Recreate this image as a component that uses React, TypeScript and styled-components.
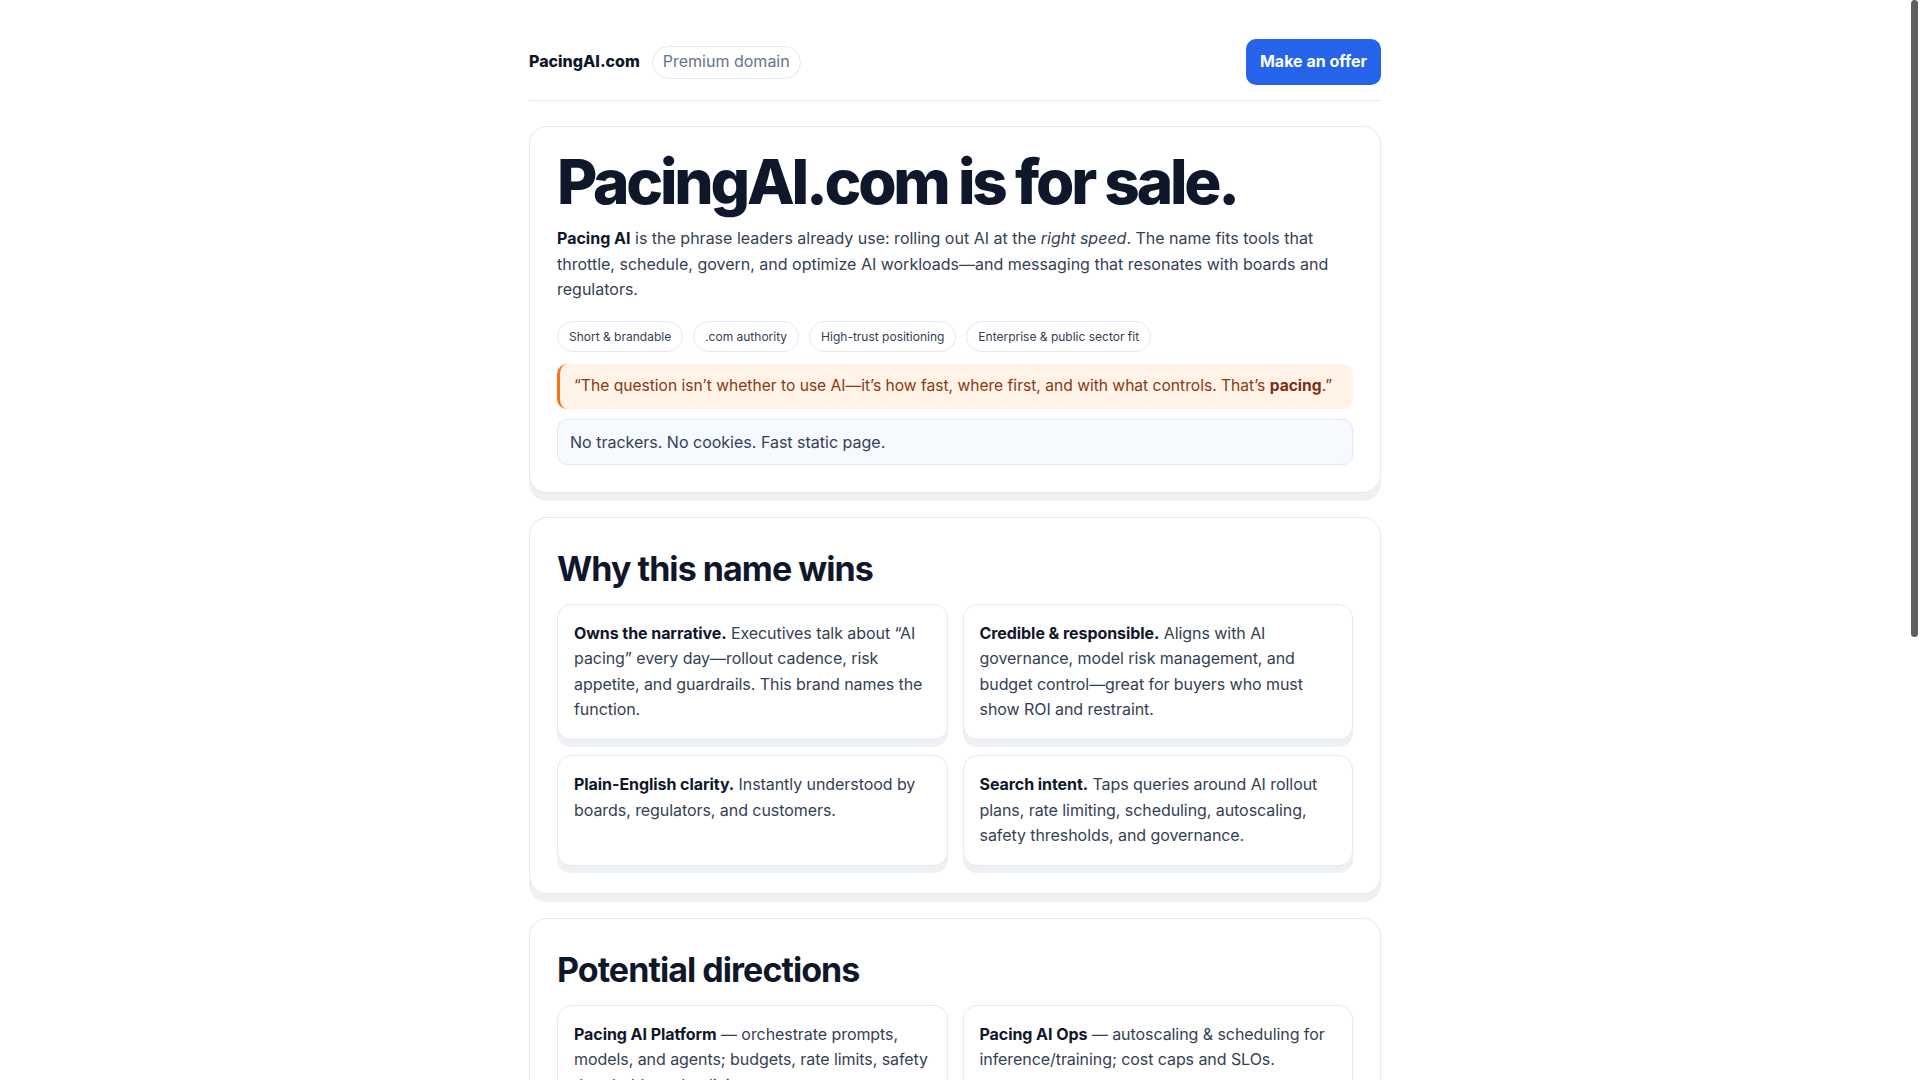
import React from "react";
import styled, { createGlobalStyle } from "styled-components";

const GlobalStyle = createGlobalStyle`
  * {
    box-sizing: border-box;
  }
  body {
    margin: 0;
    background: #ffffff;
    color: #334155;
    font-family: Inter, "Noto Sans", "Liberation Sans", sans-serif;
    font-size: 16px;
    line-height: 1.6;
    -webkit-font-smoothing: antialiased;
  }
`;

// room for the classic scrollbar the reference was captured with
const Viewport = styled.div`
  padding-right: 10px;
`;

const ScrollThumb = styled.div`
  position: fixed;
  top: 0;
  right: 2px;
  width: 7px;
  height: 637px;
  border-radius: 4px;
  background: #5f5f5f;
`;

const Page = styled.div`
  max-width: 900px;
  margin: 0 auto;
  padding: 0 24px 48px;
`;

const Header = styled.header`
  display: flex;
  align-items: center;
  justify-content: space-between;
  padding: 39px 0 15px;
  border-bottom: 1px solid #e5e9f0;
`;

const Brand = styled.div`
  display: flex;
  align-items: center;
  gap: 12px;
`;

const Logo = styled.span`
  font-size: 16px;
  font-weight: 800;
  color: #0f172a;
`;

const Pill = styled.span`
  display: inline-flex;
  align-items: center;
  height: 33px;
  padding: 0 10px;
  border: 1px solid #e2e8f0;
  border-radius: 999px;
  font-size: 16px;
  color: #64748b;
`;

const Button = styled.a`
  display: inline-flex;
  align-items: center;
  justify-content: center;
  height: 46px;
  padding: 0 14px;
  border-radius: 10px;
  background: #2563eb;
  color: #ffffff;
  font-size: 16px;
  font-weight: 700;
  text-decoration: none;
  cursor: pointer;
`;

const Main = styled.main`
  display: flex;
  flex-direction: column;
  gap: 24px;
  margin-top: 25px;
`;

const Card = styled.section`
  border: 1px solid #e5e9f0;
  border-radius: 18px;
  padding: 27px;
  background: #ffffff;
  box-shadow: 0 8px 0 #eef1f4;
`;

const Title = styled.h1`
  margin: -5px 0 12px;
  font-size: 62px;
  line-height: 1.05;
  font-weight: 760;
  letter-spacing: -0.052em;
  color: #0f172a;
`;

const Lead = styled.p`
  margin: 0 0 18px;
  font-size: 16px;
  line-height: 1.6;
  color: #334155;

  strong {
    color: #0f172a;
    font-weight: 700;
  }
`;

const Chips = styled.div`
  display: flex;
  flex-wrap: wrap;
  gap: 10px;
  margin-bottom: 12px;
`;

const Chip = styled.span`
  display: inline-flex;
  align-items: center;
  height: 31px;
  padding: 0 11px;
  border: 1px solid #e2e8f0;
  border-radius: 999px;
  font-size: 12px;
  color: #334155;
`;

const Quote = styled.blockquote`
  margin: 0 0 10px;
  padding: 10px 14px;
  border-left: 3px solid #f97316;
  border-radius: 10px;
  background: #fff3e8;
  color: #8a3a0c;
  font-size: 15.6px;
  line-height: 1.6;

  strong {
    font-weight: 700;
    color: #7c2d12;
  }
`;

const Note = styled.div`
  padding: 10px 12px;
  border: 1px solid #e2e8f0;
  border-radius: 10px;
  background: #f6f9fd;
  color: #334155;
  font-size: 16px;
  line-height: 1.5;
`;

const SectionTitle = styled.h2`
  margin: 4px 0 14px;
  font-size: 34px;
  line-height: 1.2;
  font-weight: 750;
  letter-spacing: -0.028em;
  color: #0f172a;
`;

const Grid = styled.div`
  display: grid;
  grid-template-columns: 1fr 1fr;
  gap: 15px;
`;

const Tile = styled.div`
  border: 1px solid #e5e9f0;
  border-radius: 14px;
  padding: 16px;
  background: #ffffff;
  box-shadow: 0 7px 0 #eef1f4;
  font-size: 16px;
  line-height: 1.6;
  letter-spacing: -0.004em;
  color: #334155;

  strong {
    color: #0f172a;
    font-weight: 700;
  }
`;

const OfferRow = styled.div`
  display: flex;
  align-items: center;
  gap: 16px;
  margin-top: 6px;
`;

const Muted = styled.p`
  margin: 0 0 16px;
  color: #475569;
`;

const Footer = styled.footer`
  margin-top: 40px;
  padding-top: 20px;
  border-top: 1px solid #e5e9f0;
  font-size: 14px;
  color: #64748b;
`;

const reasons = [
  {
    head: "Owns the narrative.",
    body: "Executives talk about “AI pacing” every day—rollout cadence, risk appetite, and guardrails. This brand names the function.",
  },
  {
    head: "Credible & responsible.",
    body: "Aligns with AI governance, model risk management, and budget control—great for buyers who must show ROI and restraint.",
  },
  {
    head: "Plain-English clarity.",
    body: "Instantly understood by boards, regulators, and customers.",
  },
  {
    head: "Search intent.",
    body: "Taps queries around AI rollout plans, rate limiting, scheduling, autoscaling, safety thresholds, and governance.",
  },
];

const directions = [
  {
    head: "Pacing AI Platform",
    body: "orchestrate prompts, models, and agents; budgets, rate limits, safety thresholds and policies.",
  },
  {
    head: "Pacing AI Ops",
    body: "autoscaling & scheduling for inference/training; cost caps and SLOs.",
  },
  {
    head: "Pacing AI Governance",
    body: "policy-as-code, risk tiers, approvals, and audit trails for regulators.",
  },
  {
    head: "Pacing AI Advisory",
    body: "rollout playbooks and readiness reviews for enterprise and public sector.",
  },
];

const App: React.FC = () => {
  return (
    <Viewport>
      <GlobalStyle />
      <ScrollThumb />
      <Page>
        <Header>
          <Brand>
            <Logo>PacingAI.com</Logo>
            <Pill>Premium domain</Pill>
          </Brand>
          <Button href="#offer">Make an offer</Button>
        </Header>

        <Main>
          <Card>
            <Title>PacingAI.com is for sale.</Title>
            <Lead>
              <strong>Pacing AI</strong> is the phrase leaders already use: rolling out AI at
              the <em>right speed</em>. The name fits tools that throttle, schedule, govern, and
              optimize AI workloads—and messaging that resonates with boards and regulators.
            </Lead>
            <Chips>
              <Chip>Short &amp; brandable</Chip>
              <Chip>.com authority</Chip>
              <Chip>High-trust positioning</Chip>
              <Chip>Enterprise &amp; public sector fit</Chip>
            </Chips>
            <Quote>
              “The question isn’t whether to use AI—it’s how fast, where first, and with what
              controls. That’s <strong>pacing</strong>.”
            </Quote>
            <Note>No trackers. No cookies. Fast static page.</Note>
          </Card>

          <Card>
            <SectionTitle>Why this name wins</SectionTitle>
            <Grid>
              {reasons.map((r) => (
                <Tile key={r.head}>
                  <strong>{r.head}</strong> {r.body}
                </Tile>
              ))}
            </Grid>
          </Card>

          <Card>
            <SectionTitle>Potential directions</SectionTitle>
            <Grid>
              {directions.map((d) => (
                <Tile key={d.head}>
                  <strong>{d.head}</strong> — {d.body}
                </Tile>
              ))}
            </Grid>
          </Card>

          <Card id="offer">
            <SectionTitle>Make an offer</SectionTitle>
            <Muted>
              Serious inquiries only. Transfer via escrow with a secure, fast handover of the
              domain and registrar push.
            </Muted>
            <OfferRow>
              <Button href="#offer">Make an offer</Button>
              <span>Typical response within one business day.</span>
            </OfferRow>
          </Card>
        </Main>

        <Footer>© PacingAI.com — All rights reserved.</Footer>
      </Page>
    </Viewport>
  );
};

export default App;
